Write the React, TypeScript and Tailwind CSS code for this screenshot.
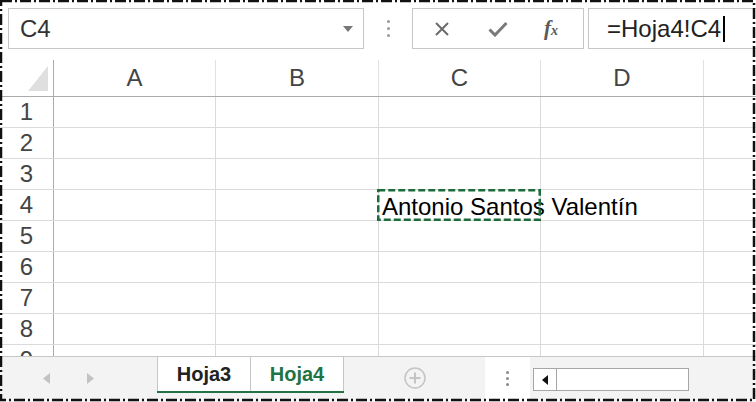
import React from 'react';

const COLS = [
  { label: 'A', w: 'w-[162px]' },
  { label: 'B', w: 'w-[163px]' },
  { label: 'C', w: 'w-[162px]' },
  { label: 'D', w: 'w-[163px]' },
];
const ROWS = [1, 2, 3, 4, 5, 6, 7, 8, 9];

function Toolbar() {
  return (
    <div className="flex h-[60px] items-start pt-[8px] pl-[8px]">
      <div className="flex h-[41px] w-[356px] items-center justify-between border border-[#c6c6c6] pl-[11px] pr-[10px]">
        <span className="text-[24px] text-[#333]">C4</span>
        <svg width="10" height="6" viewBox="0 0 10 6">
          <path d="M0 0h10L5 6z" fill="#777" />
        </svg>
      </div>
      <div className="flex h-[41px] w-[48px] flex-col items-center justify-center gap-[4px]">
        <span className="h-[3px] w-[3px] rounded-full bg-[#999]" />
        <span className="h-[3px] w-[3px] rounded-full bg-[#999]" />
        <span className="h-[3px] w-[3px] rounded-full bg-[#999]" />
      </div>
      <div className="flex h-[41px] w-[172px] items-center border border-[#c6c6c6]">
        <div className="flex w-[58px] justify-center">
          <svg width="16" height="16" viewBox="0 0 16 16">
            <path d="M2 2l12 12M14 2L2 14" stroke="#6b6b6b" strokeWidth="2" />
          </svg>
        </div>
        <div className="flex w-[54px] justify-center">
          <svg width="20" height="16" viewBox="0 0 20 16">
            <path d="M1.5 8.5l5.5 5.5L18.5 2" stroke="#7a7a7a" strokeWidth="3" fill="none" />
          </svg>
        </div>
        <div className="flex w-[52px] justify-center">
          <span className="font-['Liberation_Serif',serif] text-[21px] font-bold italic leading-none text-[#5a5a5a]">
            f<span className="text-[14px]">x</span>
          </span>
        </div>
      </div>
      <div className="ml-[4px] flex h-[41px] flex-1 items-center border border-r-0 border-[#c6c6c6] pl-[18px]">
        <span className="text-[24px] text-[#222]">=Hoja4!C4</span>
        <span className="ml-[2px] h-[26px] w-[1.5px] bg-black" />
      </div>
    </div>
  );
}

function HeaderRow() {
  return (
    <div className="flex h-[37px] border-b border-[#ababab]">
      <div className="relative w-[54px] shrink-0 border-r border-[#ababab]">
        <svg className="absolute left-[28px] top-[6px]" width="20" height="25" viewBox="0 0 20 25">
          <path d="M20 0V25H0z" fill="#dfdfdf" />
        </svg>
      </div>
      {COLS.map((c) => (
        <div
          key={c.label}
          className={`${c.w} flex shrink-0 items-center justify-center border-r border-[#e1e1e1] text-[24px] text-[#444]`}
        >
          {c.label}
        </div>
      ))}
      <div className="flex-1" />
    </div>
  );
}

function GridRow({ n }: { n: number }) {
  return (
    <div className="flex h-[31px] shrink-0 border-b border-[#dadada]">
      <div className="flex w-[54px] shrink-0 items-center justify-center border-r border-[#ababab] text-[24px] text-[#444]">
        {n}
      </div>
      {COLS.map((c) => (
        <div key={c.label} className={`${c.w} relative shrink-0 border-r border-[#dadada]`}>
          {n === 4 && c.label === 'C' && (
            <>
              <span className="absolute bottom-[-2px] left-[3px] z-10 whitespace-nowrap text-[24px] leading-[30px] text-black">
                Antonio Santos Valentín
              </span>
              <svg className="absolute left-[-2px] top-[-1px] z-20" width="164" height="32" viewBox="0 0 164 32">
                <rect x="1.25" y="1.25" width="161.5" height="29.5" fill="none" stroke="#1d6b3b" strokeWidth="2.5" strokeDasharray="7 3" />
              </svg>
            </>
          )}
        </div>
      ))}
      <div className="flex-1" />
    </div>
  );
}

function TabBar() {
  return (
    <div className="flex h-[46px] border-t border-[#c6c6c6] bg-[#f3f3f3]">
      <div className="flex w-[157px] shrink-0 items-start pt-[16px]">
        <svg className="ml-[43px]" width="7" height="11" viewBox="0 0 7 11">
          <path d="M7 0v11L0 5.5z" fill="#c2c2c2" />
        </svg>
        <svg className="ml-[37px]" width="7" height="11" viewBox="0 0 7 11">
          <path d="M0 0v11l7-5.5z" fill="#c2c2c2" />
        </svg>
      </div>
      <div className="flex h-[36px] shrink-0 border-b-[2px] border-[#217346] bg-white">
        <div className="flex w-[94px] items-center justify-center border-x border-[#c6c6c6] text-[20px] font-bold text-[#222]">
          Hoja3
        </div>
        <div className="flex w-[93px] items-center justify-center border-r border-[#c6c6c6] text-[20px] font-bold text-[#217346]">
          Hoja4
        </div>
      </div>
      <div className="flex w-[141px] shrink-0 items-start justify-center pt-[10px]">
        <svg width="22" height="22" viewBox="0 0 22 22">
          <circle cx="11" cy="11" r="10" fill="none" stroke="#c4c4c4" strokeWidth="1.5" />
          <path d="M11 5.5v11M5.5 11h11" stroke="#c4c4c4" strokeWidth="2" />
        </svg>
      </div>
      <div className="flex h-full w-[45px] shrink-0 flex-col items-center gap-[3px] bg-white pt-[14px]">
        <span className="h-[3px] w-[3px] rounded-full bg-[#8a8a8a]" />
        <span className="h-[3px] w-[3px] rounded-full bg-[#8a8a8a]" />
        <span className="h-[3px] w-[3px] rounded-full bg-[#8a8a8a]" />
      </div>
      <div className="ml-[3px] mt-[11px] flex h-[23px] w-[156px] shrink-0 border border-[#a6a6a6] bg-white">
        <div className="flex w-[23px] items-center justify-center border-r border-[#a6a6a6]">
          <svg width="6" height="10" viewBox="0 0 6 10">
            <path d="M6 0v10L0 5z" fill="#111" />
          </svg>
        </div>
      </div>
      <div className="flex-1" />
    </div>
  );
}

export default function App() {
  return (
    <div className="relative h-[402px] w-[756px] overflow-hidden bg-white font-['Liberation_Sans',Arial,sans-serif]">
      <Toolbar />
      <div className="h-[296px] overflow-hidden">
        <HeaderRow />
        {ROWS.map((n) => (
          <GridRow key={n} n={n} />
        ))}
      </div>
      <TabBar />
      <svg className="pointer-events-none absolute left-0 top-0" width="756" height="402" viewBox="0 0 756 402">
        <rect x="1" y="1" width="753" height="399" fill="none" stroke="#111" strokeWidth="2.5" strokeDasharray="11 3 2 3" />
      </svg>
    </div>
  );
}
